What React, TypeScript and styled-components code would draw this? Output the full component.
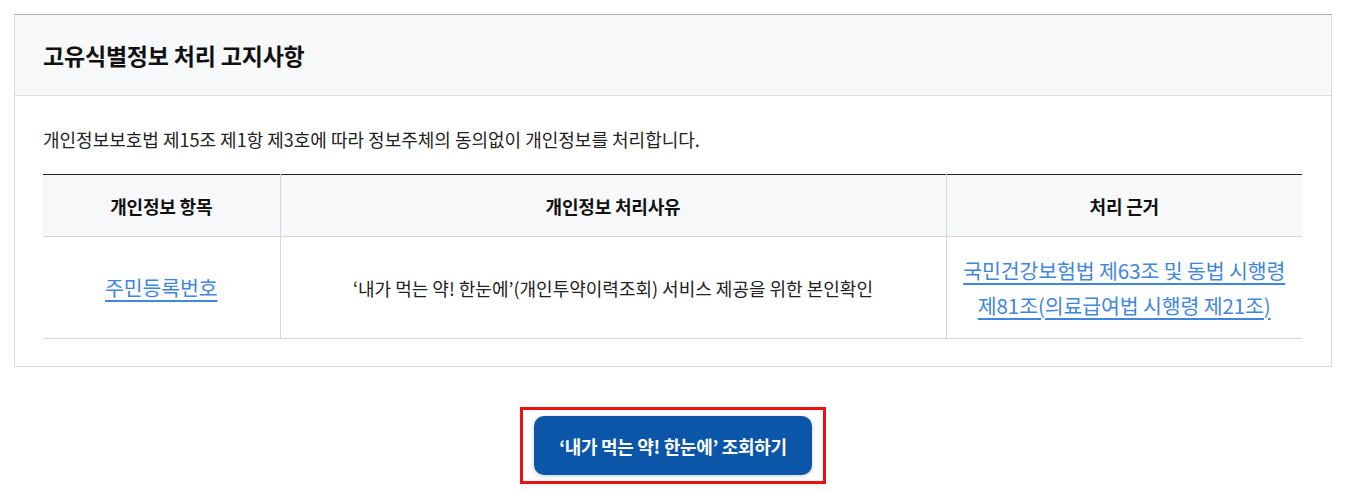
import React from "react";
import styled, { createGlobalStyle } from "styled-components";

const Global = createGlobalStyle`
  html, body { margin: 0; padding: 0; background: #fff; }
  body { font-family: "Noto Sans CJK KR", "Noto Sans", sans-serif; color: #222; }
`;

const Page = styled.div`
  padding: 14px 16px 0 14px;
`;

const Box = styled.section`
  border: 1px solid #dcdcdc;
  border-top-color: #b0b0b0;
`;

const Head = styled.div`
  background: #f7f8fa;
  border-bottom: 1px solid #dcdcdc;
  height: 80px;
  display: flex;
  align-items: center;
  padding: 0 28px;
`;

const Title = styled.h2`
  margin: 0;
  font-size: 23px;
  font-weight: 700;
  color: #111;
  letter-spacing: -0.2px;
`;

const Body = styled.div`
  padding: 31px 29px 27px 28px;
`;

const Lead = styled.p`
  margin: 0 0 23px;
  font-size: 18px;
  line-height: 24px;
  letter-spacing: 0;
  color: #222;
`;

const Table = styled.table`
  width: 100%;
  border-collapse: collapse;
  border-top: 1px solid #222;
  table-layout: fixed;
`;

const Th = styled.th`
  background: #f7f8fa;
  height: 61px;
  padding: 0;
  font-size: 18px;
  font-weight: 700;
  color: #111;
  text-align: center;
  border-bottom: 1px solid #d6d6d6;
  letter-spacing: -0.2px;
  & + & { border-left: 1px solid #d6d6d6; }
`;

const Td = styled.td`
  height: 101px;
  padding: 0;
  text-align: center;
  font-size: 18px;
  color: #222;
  letter-spacing: 0;
  border-bottom: 1px solid #d6d6d6;
  & + & { border-left: 1px solid #d6d6d6; }
`;

const Link = styled.a`
  color: #3f86de;
  text-decoration: underline;
  text-underline-offset: 4px;
  font-size: 20.5px;
  line-height: 35px;
  letter-spacing: -0.1px;
  cursor: pointer;
`;

const Actions = styled.div`
  display: flex;
  justify-content: center;
  padding-top: 40px;
`;

const Focus = styled.div`
  border: 3px solid #ee1111;
  padding: 6px 11px;
`;

const Button = styled.button`
  width: 278px;
  height: 59px;
  border: 0;
  border-radius: 10px;
  background: #0b56a8;
  color: #fff;
  font-family: inherit;
  font-size: 18px;
  font-weight: 700;
  letter-spacing: -0.3px;
  box-shadow: 0 1px 4px rgba(0, 0, 0, 0.2);
  cursor: pointer;
`;

export default function App() {
  return (
    <Page>
      <Global />
      <Box>
        <Head>
          <Title>고유식별정보 처리 고지사항</Title>
        </Head>
        <Body>
          <Lead>개인정보보호법 제15조 제1항 제3호에 따라 정보주체의 동의없이 개인정보를 처리합니다.</Lead>
          <Table>
            <colgroup>
              <col style={{ width: 237 }} />
              <col style={{ width: 666 }} />
              <col />
            </colgroup>
            <thead>
              <tr>
                <Th>개인정보 항목</Th>
                <Th>개인정보 처리사유</Th>
                <Th>처리 근거</Th>
              </tr>
            </thead>
            <tbody>
              <tr>
                <Td>
                  <Link>주민등록번호</Link>
                </Td>
                <Td>‘내가 먹는 약! 한눈에’(개인투약이력조회) 서비스 제공을 위한 본인확인</Td>
                <Td>
                  <Link>
                    국민건강보험법 제63조 및 동법 시행령
                    <br />
                    제81조(의료급여법 시행령 제21조)
                  </Link>
                </Td>
              </tr>
            </tbody>
          </Table>
        </Body>
      </Box>
      <Actions>
        <Focus>
          <Button>‘내가 먹는 약! 한눈에’ 조회하기</Button>
        </Focus>
      </Actions>
    </Page>
  );
}
